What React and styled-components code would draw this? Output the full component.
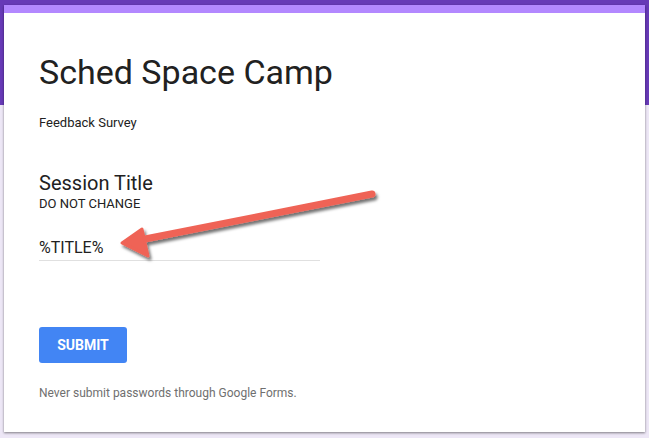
import React from 'react'
import styled, { createGlobalStyle } from 'styled-components'

const Global = createGlobalStyle`
  html, body { margin: 0; padding: 0; }
  body {
    width: 649px;
    height: 438px;
    overflow: hidden;
    font-family: Roboto, "Liberation Sans", Arial, sans-serif;
    background: linear-gradient(to bottom, #673ab7 0, #673ab7 105px, #ede7f6 105px, #ede7f6 100%);
  }
`

const Page = styled.div`
  padding: 5px 4px 6px 4px;
  height: 438px;
  box-sizing: border-box;
`

const Card = styled.div`
  position: relative;
  height: 427px;
  background: #fff;
  border-top: 8px solid #b388ff;
  box-shadow: 0 1px 2px rgba(0, 0, 0, 0.35), 0 1px 3px rgba(0,0,0,0.15);
  box-sizing: border-box;
  padding: 35px 35px 0 35px;
  color: #212121;
`

const Title = styled.h1`
  margin: 0;
  font-weight: 400;
  font-size: 34px;
  line-height: 48px;
  letter-spacing: 0;
  color: #212121;
`

const Description = styled.div`
  margin-top: 17px;
  font-size: 13px;
  line-height: 20px;
`

const Question = styled.div`
  margin-top: 38px;
`

const QuestionTitle = styled.div`
  font-size: 20px;
  line-height: 24px;
`

const HelpText = styled.div`
  font-size: 13px;
  line-height: 16px;
  margin-top: 1px;
`

const Answer = styled.div`
  margin-top: 24px;
  width: 281px;
  font-size: 16px;
  line-height: 24px;
  padding-bottom: 0;
  border-bottom: 1px solid #e0e0e0;
`

const SubmitButton = styled.button`
  margin-top: 66px;
  display: block;
  width: 88px;
  height: 36px;
  border: none;
  border-radius: 3px;
  background: #4285f4;
  color: #fff;
  font-family: inherit;
  font-weight: 700;
  font-size: 14px;
  letter-spacing: 0;
  padding: 0;
`

const Footer = styled.div`
  margin-top: 22px;
  font-size: 12px;
  line-height: 16px;
  color: #6f6f6f;
`

const Arrow = styled.svg`
  position: absolute;
  left: -4px;
  top: -13px;
  overflow: visible;
  pointer-events: none;
`

export default function App() {
  return (
    <>
      <Global />
      <Page>
        <Card>
          <Title>Sched Space Camp</Title>
          <Description>Feedback Survey</Description>
          <Question>
            <QuestionTitle>Session Title</QuestionTitle>
            <HelpText>DO NOT CHANGE</HelpText>
            <Answer>%TITLE%</Answer>
          </Question>
          <SubmitButton>SUBMIT</SubmitButton>
          <Footer>Never submit passwords through Google Forms.</Footer>
          <Arrow width="649" height="438" viewBox="0 0 649 438">
            <defs>
              <filter id="sh" x="-20%" y="-50%" width="140%" height="200%">
                <feDropShadow dx="2" dy="3" stdDeviation="1.6" floodColor="#000" floodOpacity="0.55" />
              </filter>
            </defs>
            <g filter="url(#sh)" fill="#ef6356" stroke="#ef6356" strokeLinejoin="round">
              <line x1="372" y1="194" x2="140" y2="240" strokeWidth="7" strokeLinecap="round" />
              <polygon points="122,243 142,229 148,256" strokeWidth="3" />
            </g>
          </Arrow>
        </Card>
      </Page>
    </>
  )
}
